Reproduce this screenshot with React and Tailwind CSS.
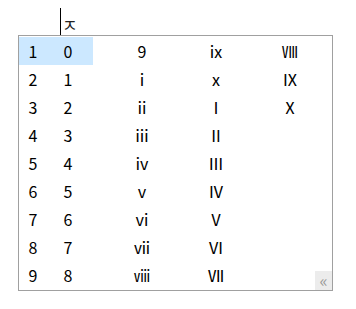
import React from 'react';

const columns = [
  ['0', '1', '2', '3', '4', '5', '6', '7', '8'],
  ['9', 'ⅰ', 'ⅱ', 'ⅲ', 'ⅳ', 'ⅴ', 'ⅵ', 'ⅶ', 'ⅷ'],
  ['ⅸ', 'ⅹ', 'Ⅰ', 'Ⅱ', 'Ⅲ', 'Ⅳ', 'Ⅴ', 'Ⅵ', 'Ⅶ'],
  ['Ⅷ', 'Ⅸ', 'Ⅹ'],
];

const font = { fontFamily: '"Noto Sans CJK KR", "Noto Sans", sans-serif' };

const Cell = ({ index, value, selected }) => (
  <div className={`flex h-[28px] w-[74px] items-center ${selected ? 'bg-[#cce8ff]' : ''}`}>
    <span className="w-[28px] text-center">{index}</span>
    <span className="w-[42px] text-center">{value}</span>
  </div>
);

export default function App() {
  return (
    <div className="h-[309px] w-[356px] bg-white text-[16px] leading-none text-black" style={font}>
      <div className="flex h-[35px] items-end">
        <div className="ml-[60px] flex h-[27px] items-start">
          <div className="h-[27px] w-px bg-black" />
          <span className="ml-[1px] mt-[8px] text-[17px] text-[#222]">ㅈ</span>
        </div>
      </div>
      <div className="ml-[18px] flex h-[256px] w-[315px] border border-[#a0a0a0] pt-px">
        {columns.map((col, c) => (
          <div key={c} className="flex flex-col">
            {col.map((v, r) => (
              <Cell key={r} index={c === 0 ? r + 1 : ''} value={v} selected={c === 0 && r === 0} />
            ))}
          </div>
        ))}
        <div className="flex flex-1 flex-col justify-end">
          <div className="flex h-[19px] items-center justify-center bg-[#ececec] pb-[2px] text-[17px] text-[#999]">
            «
          </div>
        </div>
      </div>
    </div>
  );
}
